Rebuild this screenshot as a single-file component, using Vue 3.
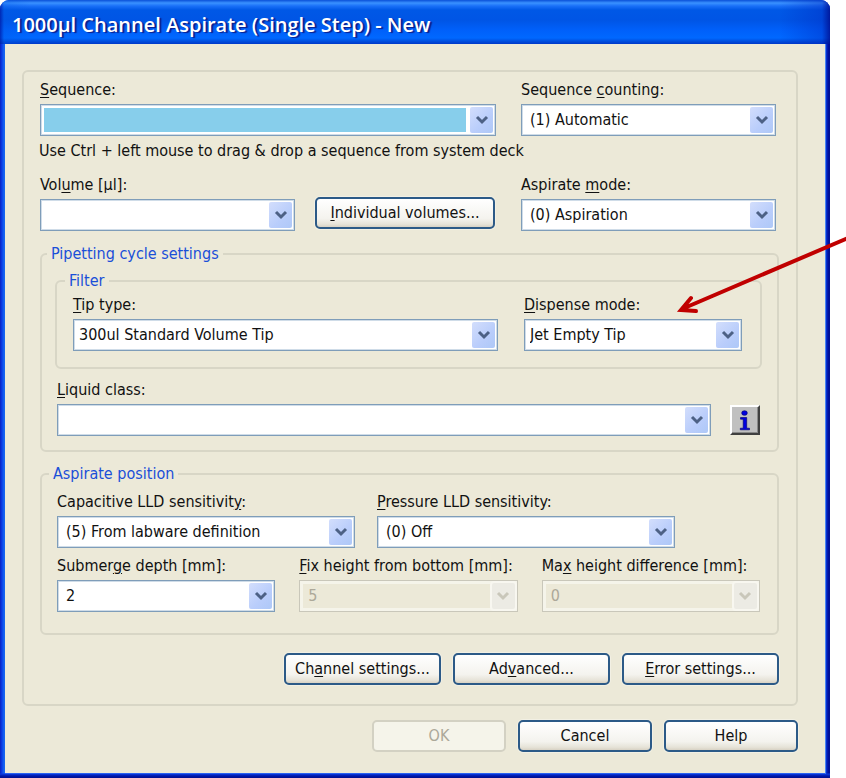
<script setup>
import { reactive } from 'vue'

const form = reactive({
  sequence: '',
  counting: '(1) Automatic',
  volume: '',
  aspirateMode: '(0) Aspiration',
  tipType: '300ul Standard Volume Tip',
  dispenseMode: 'Jet Empty Tip',
  liquidClass: '',
  capacitive: '(5) From labware definition',
  pressure: '(0) Off',
  submerge: '2',
  fixHeight: '5',
  maxHeight: '0',
})

// Each label is split around its keyboard mnemonic: [before, key, after]
const rows = {
  sequence: [
    { key: 'sequence', label: ['', 'S', 'equence:'], filled: true },
    { key: 'counting', label: ['Sequence ', 'c', 'ounting:'] },
  ],
  filter: [
    { key: 'tipType', label: ['', 'T', 'ip type:'] },
    { key: 'dispenseMode', label: ['', 'D', 'ispense mode:'] },
  ],
  lld: [
    { key: 'capacitive', label: ['Capacitive LLD sensitivit', 'y', ':'] },
    { key: 'pressure', label: ['', 'P', 'ressure LLD sensitivity:'] },
  ],
  heights: [
    { key: 'submerge', label: ['Submer', 'g', 'e depth [mm]:'] },
    { key: 'fixHeight', label: ['', 'F', 'ix height from bottom [mm]:'], disabled: true },
    { key: 'maxHeight', label: ['Ma', 'x', ' height difference [mm]:'], disabled: true },
  ],
}
</script>

<template>
  <div class="desktop">
    <main class="window">
      <header class="titlebar">
        <h1>1000µl Channel Aspirate (Single Step) - New</h1>
      </header>

      <form class="body" @submit.prevent>
        <section class="panel">
          <div class="row row-sequence">
            <div v-for="f in rows.sequence" :key="f.key" class="field">
              <label :for="f.key">{{ f.label[0] }}<u>{{ f.label[1] }}</u>{{ f.label[2] }}</label>
              <span class="combo" :class="{ filled: f.filled }">
                <select :id="f.key" v-model="form[f.key]"><option>{{ form[f.key] }}</option></select>
                <span class="drop"><svg viewBox="0 0 14 10"><path d="M2 2l5 5 5-5" /></svg></span>
              </span>
            </div>
          </div>

          <p class="hint">Use Ctrl + left mouse to drag &amp; drop a sequence from system deck</p>

          <div class="row row-volume">
            <div class="field">
              <label for="volume">Vol<u>u</u>me [µl]:</label>
              <span class="combo">
                <select id="volume" v-model="form.volume"><option></option></select>
                <span class="drop"><svg viewBox="0 0 14 10"><path d="M2 2l5 5 5-5" /></svg></span>
              </span>
            </div>
            <button type="button" class="btn"><span><u>I</u>ndividual volumes...</span></button>
            <div class="field">
              <label for="aspirateMode">Aspirate <u>m</u>ode:</label>
              <span class="combo">
                <select id="aspirateMode" v-model="form.aspirateMode"><option>(0) Aspiration</option></select>
                <span class="drop"><svg viewBox="0 0 14 10"><path d="M2 2l5 5 5-5" /></svg></span>
              </span>
            </div>
          </div>

          <fieldset class="group cycle">
            <legend>Pipetting cycle settings</legend>
            <fieldset class="group filter">
              <legend>Filter</legend>
              <div class="row row-filter">
                <div v-for="f in rows.filter" :key="f.key" class="field">
                  <label :for="f.key">{{ f.label[0] }}<u>{{ f.label[1] }}</u>{{ f.label[2] }}</label>
                  <span class="combo tight">
                    <select :id="f.key" v-model="form[f.key]"><option>{{ form[f.key] }}</option></select>
                    <span class="drop"><svg viewBox="0 0 14 10"><path d="M2 2l5 5 5-5" /></svg></span>
                  </span>
                </div>
              </div>
            </fieldset>
            <div class="row row-liquid">
              <div class="field">
                <label for="liquidClass"><u>L</u>iquid class:</label>
                <span class="combo">
                  <select id="liquidClass" v-model="form.liquidClass"><option></option></select>
                  <span class="drop"><svg viewBox="0 0 14 10"><path d="M2 2l5 5 5-5" /></svg></span>
                </span>
              </div>
              <button type="button" class="info" aria-label="Liquid class information">
                <svg viewBox="0 0 12 21">
                  <ellipse cx="5.500" cy="3" rx="2.800" ry="2.300" />
                  <path d="M1.500 7.500h6.200v10.700H10.500v1.600H1.300v-1.600h2.900V9.200H1.500z" />
                </svg>
              </button>
            </div>
          </fieldset>

          <fieldset class="group position">
            <legend>Aspirate position</legend>
            <div class="row row-lld">
              <div v-for="f in rows.lld" :key="f.key" class="field">
                <label :for="f.key">{{ f.label[0] }}<u>{{ f.label[1] }}</u>{{ f.label[2] }}</label>
                <span class="combo">
                  <select :id="f.key" v-model="form[f.key]"><option>{{ form[f.key] }}</option></select>
                  <span class="drop"><svg viewBox="0 0 14 10"><path d="M2 2l5 5 5-5" /></svg></span>
                </span>
              </div>
            </div>
            <div class="row row-heights">
              <div v-for="f in rows.heights" :key="f.key" class="field">
                <label :for="f.key">{{ f.label[0] }}<u>{{ f.label[1] }}</u>{{ f.label[2] }}</label>
                <span class="combo" :class="{ disabled: f.disabled }">
                  <select :id="f.key" v-model="form[f.key]" :disabled="f.disabled"><option>{{ form[f.key] }}</option></select>
                  <span class="drop"><svg viewBox="0 0 14 10"><path d="M2 2l5 5 5-5" /></svg></span>
                </span>
              </div>
            </div>
          </fieldset>

          <div class="actions">
            <button type="button" class="btn"><span>Ch<u>a</u>nnel settings...</span></button>
            <button type="button" class="btn"><span>Ad<u>v</u>anced...</span></button>
            <button type="button" class="btn"><span><u>E</u>rror settings...</span></button>
          </div>
        </section>

        <footer class="footer">
          <button type="submit" class="btn" disabled>OK</button>
          <button type="button" class="btn">Cancel</button>
          <button type="button" class="btn">Help</button>
        </footer>
      </form>
    </main>

    <svg class="pointer" viewBox="0 0 170 90" aria-hidden="true">
      <path d="M172 7 6 78M15 67 5 79l15 1" />
    </svg>
  </div>
</template>

<style>
body {
  margin: 0;
  background: #fff;
}
</style>

<style scoped>
* {
  box-sizing: border-box;
}

.desktop {
  position: relative;
  padding-right: 16px;
  font-family: "DejaVu Sans Condensed", "DejaVu Sans", Tahoma, sans-serif;
  font-size: 16px;
  line-height: 20px;
  color: #111;
}

.window {
  border-radius: 9px 9px 0 0;
  background:
    linear-gradient(0deg, #000f90 0, #0018a8 2px, #0a3ae0 4px, transparent 5px),
    linear-gradient(90deg, #0a1fc0 0, #0a3fe8 2px, #1664f0 4px, #0a50e8 50%, #0a3ae0 calc(100% - 4px), #0012a0 calc(100% - 2px), #000f90 100%);
  padding: 0 4px 4px 5px;
  overflow: hidden;
}

.titlebar {
  height: 44px;
  margin: 0 -4px 0 -5px;
  padding: 0 12px;
  display: flex;
  align-items: center;
  background:
    linear-gradient(90deg, rgba(0, 20, 160, 0.7) 0, rgba(0, 90, 230, 0.3) 4px, transparent 30px, transparent calc(100% - 50px), rgba(0, 40, 190, 0.4) calc(100% - 8px), rgba(0, 10, 140, 0.8) 100%),
    linear-gradient(#0a50d8 0, #3a92ff 3px, #1a70f8 6px, #0058e6 10px, #0055e5 20px, #0060fa 30px, #0068ff 38px, #0050e0 41px, #0038c8 44px);
}

h1 {
  margin: 0;
  padding-top: 6px;
  font-family: "Open Sans", "Trebuchet MS", sans-serif;
  font-size: 20px;
  line-height: 28px;
  font-weight: 600;
  color: #fff;
  text-shadow: 2px 1px 1px #0a1f8c;
  white-space: nowrap;
}

.body {
  background: #ece9d8;
  padding: 26px 27px 21px 17px;
  border-right: 1px solid #4a86f0;
  border-bottom: 1px solid #2a62f0;
}

.panel {
  border: 2px solid #d8d6c6;
  border-radius: 6px;
  padding: 8px 17px 19px 16px;
}

.row {
  display: grid;
  align-items: end;
}

.row-sequence {
  grid-template-columns: 456fr 255fr;
  gap: 25px;
  padding-right: 3px;
}

.row-volume {
  grid-template-columns: 255fr 186fr 255fr;
  column-gap: 20px;
  margin-top: 14px;
  padding-right: 3px;
}

.row-volume .btn {
  margin: 0 6px 2px 0;
}

.row-filter {
  grid-template-columns: 425fr 218fr;
  gap: 26px;
}

.row-liquid {
  grid-template-columns: 1fr 30px;
  gap: 19px;
  margin-top: 11px;
  padding: 0 2px;
}

.row-lld {
  grid-template-columns: 1fr 1fr;
  gap: 22px;
  padding-right: 85px;
}

.row-heights {
  grid-template-columns: repeat(3, 1fr);
  gap: 24px;
  margin-top: 8px;
}

.field {
  display: flex;
  flex-direction: column;
  gap: 4px;
  min-width: 0;
}

label {
  white-space: nowrap;
}

u {
  text-decoration-thickness: 1px;
  text-underline-offset: 2px;
}

.hint {
  margin: 5px 0 0 -1px;
}

.combo {
  position: relative;
  display: block;
}

select {
  display: block;
  width: 100%;
  height: 32px;
  padding: 0 30px 1px 8px;
  appearance: none;
  border: 1px solid #7f9db9;
  border-radius: 0;
  box-shadow: inset 0 0 0 1px #cfdce8;
  background: #fff;
  font: inherit;
  color: #111;
}

.tight select {
  padding-left: 5px;
}

.filled select {
  background: linear-gradient(#87ceeb, #87ceeb) 3px 3px / calc(100% - 32px) calc(100% - 6px) no-repeat #fff;
}

.drop {
  position: absolute;
  top: 3px;
  right: 3px;
  bottom: 3px;
  width: 23px;
  display: flex;
  align-items: center;
  justify-content: center;
  border-radius: 2px;
  background: linear-gradient(135deg, #d3defc, #b9cdfb 60%, #aec8f7);
  pointer-events: none;
}

.drop svg {
  width: 14px;
  height: 10px;
  fill: none;
  stroke: #4d6185;
  stroke-width: 3;
}

.disabled select {
  border-color: #c9c7ba;
  box-shadow: inset 0 0 0 3px #f5f4ea;
  background: #ece9d8;
  color: #aca899;
  opacity: 1;
}

.disabled .drop {
  background: #ecebe4;
  box-shadow: 0 0 0 2px #f8f7f0;
}

.disabled .drop svg {
  stroke: #c9c7ba;
}

.group {
  min-width: 0;
  margin: 0;
  border: 2px solid #d8d6c6;
  border-radius: 6px;
}

legend {
  margin-left: -8px;
  padding: 0 4px;
  color: #1a4fd8;
}

.cycle {
  margin-top: 13px;
  padding: 7px 15px 14px 13px;
}

.filter {
  padding: 4px 18px 16px 16px;
}

.position {
  margin-top: 12px;
  padding: 8px 17px 21px 15px;
}

.info {
  width: 30px;
  height: 30px;
  margin-bottom: 1px;
  padding: 0;
  display: flex;
  align-items: center;
  justify-content: center;
  border: 2px solid;
  border-color: #fff #404040 #404040 #fff;
  background: #c0c0c0;
  box-shadow: inset -1px -1px 0 #8a8a8a;
}

.info svg {
  width: 12px;
  height: 21px;
  fill: #0000e0;
  stroke: #000068;
  stroke-width: 0.600;
}

.btn {
  height: 32px;
  padding: 0 0 1px;
  border: 2px solid #2c5a87;
  border-radius: 5px;
  background: linear-gradient(#fff, #f4f3ee 70%, #e6e3d8 90%, #d8d2c4);
  box-shadow: 0 0 0 1px #f2f0e4;
  font: inherit;
  color: #111;
  white-space: nowrap;
}

.btn:disabled {
  border-color: #d3d1c3;
  background: #f5f4ea;
  box-shadow: none;
  color: #aca899;
}

.actions,
.footer {
  display: flex;
  justify-content: flex-end;
  gap: 12px;
}

.actions {
  margin-top: 18px;
}

.actions .btn {
  width: 157px;
}

.footer {
  margin-top: 14px;
}

.footer .btn {
  width: 134px;
}

.pointer {
  position: absolute;
  top: 231px;
  right: 0;
  width: 170px;
  height: 90px;
  fill: none;
  stroke: #c00000;
  stroke-width: 4;
  stroke-linecap: round;
  stroke-linejoin: miter;
  pointer-events: none;
}
</style>
